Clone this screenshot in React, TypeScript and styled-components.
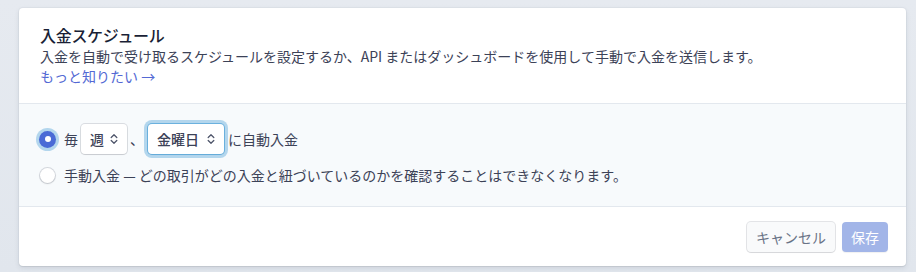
import React from "react";
import styled, { createGlobalStyle } from "styled-components";

const Global = createGlobalStyle`
  html, body { margin: 0; padding: 0; }
  body {
    background: #e3e8ee;
    font-family: "Noto Sans CJK JP", "Noto Sans", sans-serif;
    color: #3c4257;
    -webkit-font-smoothing: antialiased;
  }
`;

const Page = styled.div`
  padding: 8px 10px 6px 19px;
  height: 272px;
  box-sizing: border-box;
  background: linear-gradient(180deg, #e6eaf0 0%, #e1e6ed 100%);
`;

const Card = styled.div`
  width: 887px;
  background: #fff;
  border-radius: 4px;
  box-shadow: 0 0 0 1px rgba(136, 152, 170, 0.08), 0 2px 5px rgba(60, 66, 87, 0.12),
    0 1px 1px rgba(0, 0, 0, 0.06);
  overflow: hidden;
`;

const Header = styled.div`
  padding: 16px 20px 17px 21px;
  display: flex;
  flex-direction: column;
`;

const Title = styled.div`
  font-size: 16px;
  line-height: 22px;
  font-weight: 500;
  color: #1a1f36;
  letter-spacing: -0.3px;
`;

const Desc = styled.div`
  font-size: 14px;
  line-height: 20px;
  color: #3c4257;
`;

const Link = styled.a`
  font-size: 14px;
  line-height: 20px;
  color: #5469d4;
  font-weight: 400;
  text-decoration: none;
`;

const Body = styled.div`
  background: #f7fafc;
  border-top: 1px solid #e3e8ee;
  border-bottom: 1px solid #e3e8ee;
  padding: 20px 21px 21px;
  display: flex;
  flex-direction: column;
  gap: 11px;
`;

const Row = styled.div`
  display: flex;
  align-items: center;
  font-size: 14px;
  line-height: 20px;
  color: #3c4257;
  min-height: 20px;
`;

const Radio = styled.span<{ $checked?: boolean }>`
  width: 15px;
  height: 15px;
  border-radius: 50%;
  box-sizing: border-box;
  margin-right: 9px;
  flex: none;
  display: flex;
  align-items: center;
  justify-content: center;
  background: ${(p) => (p.$checked ? "#4a6bd6" : "#fff")};
  box-shadow: ${(p) =>
    p.$checked
      ? "0 0 0 1px #4a6bd6, 0 0 0 4px rgba(58,151,212,0.36)"
      : "0 0 0 1px rgba(60,66,87,0.18), 0 1px 2px rgba(0,0,0,0.1)"};
  &::after {
    content: "";
    display: ${(p) => (p.$checked ? "block" : "none")};
    width: 6px;
    height: 6px;
    border-radius: 50%;
    background: #fff;
  }
`;

const Word = styled.span<{ $ml?: number; $mr?: number }>`
  margin-left: ${(p) => p.$ml ?? 0}px;
  margin-right: ${(p) => p.$mr ?? 0}px;
`;

const Select = styled.div<{ $focus?: boolean; $w: number }>`
  width: ${(p) => p.$w}px;
  height: 30px;
  box-sizing: border-box;
  display: flex;
  align-items: center;
  justify-content: space-between;
  padding: 0 9px 0 9px;
  background: #fff;
  border-radius: 4px;
  font-weight: 500;
  color: #3c4257;
  font-size: 14px;
  box-shadow: ${(p) =>
    p.$focus
      ? "0 0 0 1px rgba(58,151,212,0.6), 0 0 0 4px rgba(58,151,212,0.36), 0 1px 1px rgba(0,0,0,0.08)"
      : "0 0 0 1px rgba(60,66,87,0.16), 0 1px 1px rgba(0,0,0,0.08)"};
`;

const Footer = styled.div`
  display: flex;
  justify-content: flex-end;
  gap: 6px;
  padding: 15px 18px 14px;
`;

const Button = styled.button<{ $primary?: boolean }>`
  height: 30px;
  box-sizing: border-box;
  padding: 0 9px;
  border: none;
  border-radius: 4px;
  font-family: inherit;
  font-size: 14px;
  font-weight: 400;
  line-height: 20px;
  color: ${(p) => (p.$primary ? "#fff" : "#697386")};
  background: ${(p) => (p.$primary ? "#a2b5e8" : "#f9fafb")};
  box-shadow: ${(p) =>
    p.$primary
      ? "0 1px 1px rgba(0,0,0,0.06)"
      : "0 0 0 1px rgba(60,66,87,0.14), 0 1px 1px rgba(0,0,0,0.06)"};
  margin: 0 ${(p) => (p.$primary ? 0 : 1)}px;
`;

const Chevron = () => (
  <svg width="8" height="12" viewBox="0 0 8 12" fill="none">
    <path
      d="M1.2 4.5 L4 1.7 L6.8 4.5 M1.2 7.5 L4 10.3 L6.8 7.5"
      stroke="#4f566b"
      strokeWidth="1.3"
      strokeLinecap="round"
      strokeLinejoin="round"
    />
  </svg>
);

export default function App() {
  return (
    <>
      <Global />
      <Page>
        <Card>
          <Header>
            <Title>入金スケジュール</Title>
            <Desc>
              入金を自動で受け取るスケジュールを設定するか、API またはダッシュボードを使用して手動で入金を送信します。
            </Desc>
            <Link href="#">もっと知りたい →</Link>
          </Header>
          <Body>
            <Row>
              <Radio $checked />
              <Word $mr={3}>毎</Word>
              <Select $w={46}>
                週
                <Chevron />
              </Select>
              <Word $ml={3} $mr={4}>、</Word>
              <Select $w={76} $focus>
                金曜日
                <Chevron />
              </Select>
              <Word $ml={4}>に自動入金</Word>
            </Row>
            <Row>
              <Radio />
              <span>手動入金 — どの取引がどの入金と紐づいているのかを確認することはできなくなります。</span>
            </Row>
          </Body>
          <Footer>
            <Button>キャンセル</Button>
            <Button $primary>保存</Button>
          </Footer>
        </Card>
      </Page>
    </>
  );
}
